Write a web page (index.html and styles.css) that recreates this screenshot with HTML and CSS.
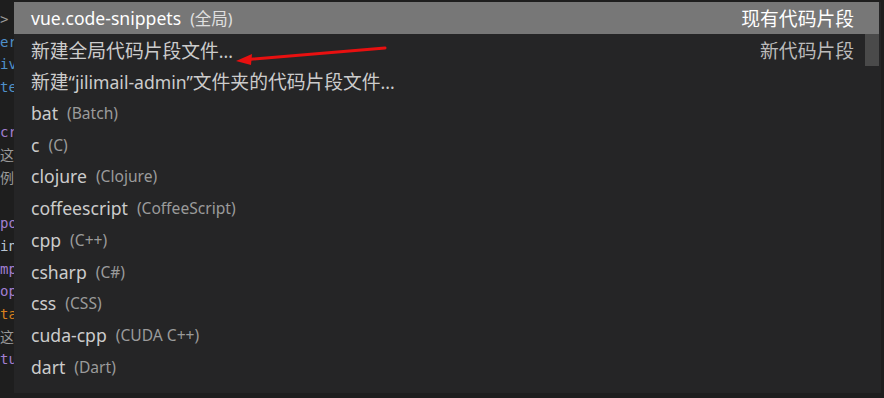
FILE: index.html
```html
<!DOCTYPE html>
<html lang="zh">
<head>
<meta charset="utf-8">
<link rel="stylesheet" href="styles.css">
</head>
<body>
<div class="editor">
  <div class="line gray">&gt; </div>
  <div class="line blue">er</div>
  <div class="line blue">iv</div>
  <div class="line blue">te</div>
  <div class="line"></div>
  <div class="line purple">cr</div>
  <div class="line gray">这</div>
  <div class="line gray">例</div>
  <div class="line"></div>
  <div class="line purple">po</div>
  <div class="line light">in</div>
  <div class="line purple">mp</div>
  <div class="line purple">op</div>
  <div class="line orange">ta</div>
  <div class="line gray">这</div>
  <div class="line purple">tu</div>
</div>

<div class="quickpick">
  <div class="list">
    <div class="row selected"><span class="label">vue.code-snippets</span><span class="desc">(<span class="cjk-s">全局</span>)</span><span class="detail">现有代码片段</span></div>
    <div class="row"><span class="label"><span class="cjk">新建全局代码片段文件</span>...</span><span class="detail">新代码片段</span></div>
    <div class="row"><span class="label"><span class="cjk">新建</span>“jilimail-admin”<span class="cjk">文件夹的代码片段文件</span>...</span></div>
    <div class="row"><span class="label">bat</span><span class="desc">(Batch)</span></div>
    <div class="row"><span class="label">c</span><span class="desc">(C)</span></div>
    <div class="row"><span class="label">clojure</span><span class="desc">(Clojure)</span></div>
    <div class="row"><span class="label">coffeescript</span><span class="desc">(CoffeeScript)</span></div>
    <div class="row"><span class="label">cpp</span><span class="desc">(C++)</span></div>
    <div class="row"><span class="label">csharp</span><span class="desc">(C#)</span></div>
    <div class="row"><span class="label">css</span><span class="desc">(CSS)</span></div>
    <div class="row"><span class="label">cuda-cpp</span><span class="desc">(CUDA C++)</span></div>
    <div class="row"><span class="label">dart</span><span class="desc">(Dart)</span></div>
  </div>
  <div class="scrollbar"></div>
</div>

<svg class="arrow" width="884" height="398" viewBox="0 0 884 398">
  <line x1="385" y1="48" x2="248" y2="59.5" stroke="#e81010" stroke-width="3" stroke-linecap="round"/>
  <polygon points="236,61 252,54 251,65" fill="#e81010"/>
</svg>
</body>
</html>
```
FILE: styles.css
```css
html, body {
  margin: 0;
  padding: 0;
}
body {
  width: 884px;
  height: 398px;
  background: #1e1e1e;
  position: relative;
  overflow: hidden;
  font-family: "Noto Sans", "Noto Sans CJK SC", sans-serif;
}
.editor {
  width: 14px;
  overflow: hidden;
  padding-top: 8px;
  font-family: "DejaVu Sans Mono", "Noto Sans CJK SC", monospace;
  font-size: 14px;
  line-height: 22.7px;
  white-space: nowrap;
}
.line { height: 22.7px; }
.gray { color: #9a9a9a; }
.blue { color: #4f8fc9; }
.purple { color: #a27fd0; }
.light { color: #b8c4d0; }
.orange { color: #d7801f; }

.quickpick {
  position: absolute;
  left: 14px;
  top: 2px;
  width: 867px;
  height: 391px;
  background: #252526;
}
.list {
  padding-right: 2px;
}
.row {
  height: 31.73px;
  display: flex;
  align-items: center;
  padding-left: 17px;
  padding-right: 25px;
  white-space: nowrap;
  font-size: 17.6px;
  color: #cccccc;
}
.row.selected {
  background: #777777;
  color: #ffffff;
}
.label {
  font-size: 17.6px;
}
.cjk {
  font-size: 18.8px;
}
.cjk-s {
  font-size: 16.5px;
}
.desc {
  font-size: 15.6px;
  color: #9b9b9b;
  margin-left: 9px;
}
.selected .desc {
  color: #e0e0e0;
}
.detail {
  margin-left: auto;
  font-size: 18.8px;
  color: #bbbbbb;
}
.selected .detail {
  color: #ffffff;
}
.scrollbar {
  position: absolute;
  left: 851px;
  top: 32px;
  width: 14px;
  height: 32px;
  background: #4a4a4a;
}
.arrow {
  position: absolute;
  left: 0;
  top: 0;
  pointer-events: none;
}
```
